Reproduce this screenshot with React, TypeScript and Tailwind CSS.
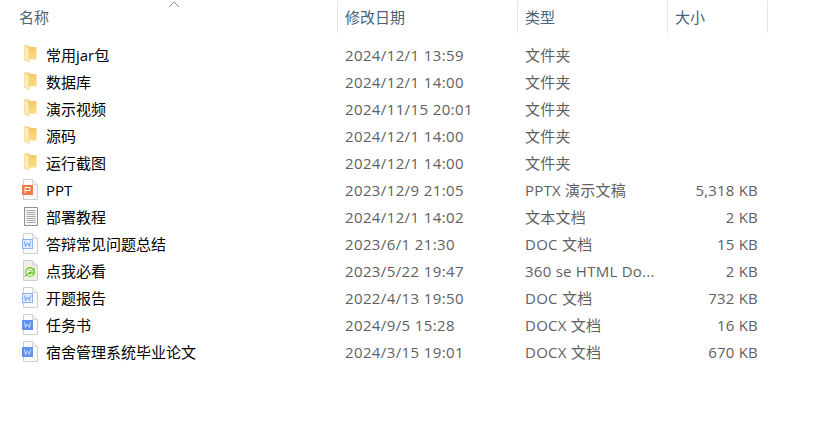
import React from "react";

const font = { fontFamily: '"Open Sans","Noto Sans CJK SC",sans-serif' };

function Folder() {
  return (
    <svg width="13" height="18" viewBox="0 0 13 18" className="block ml-[3px]">
      <defs>
        <linearGradient id="fg" x1="0" y1="0" x2="0" y2="1">
          <stop offset="0" stopColor="#f3c766" />
          <stop offset="1" stopColor="#fbdc85" />
        </linearGradient>
      </defs>
      <path d="M0 0.500h5l1 1.500h6.500v12.500H4V2z" fill="url(#fg)" />
      <path d="M0 0.500l5 2.500v14.500l-5-2.500z" fill="#fdeab6" stroke="#ebc873" strokeWidth="0.5" />
    </svg>
  );
}

function Page({ children }: { children?: React.ReactNode }) {
  return (
    <svg width="18" height="21" viewBox="0 0 18 21" className="block">
      <path d="M2.500 .5H11.500L16.500 5.500V20.500H2.500z" fill="#fbfbfb" stroke="#cfcfcf" />
      <path d="M11.500 .5V5.500H16.500" fill="#f0f0f0" stroke="#d6d6d6" />
      {children}
    </svg>
  );
}

function Ppt() {
  return (
    <Page>
      <rect x="1" y="6" width="11" height="10" fill="#f4794a" />
      <path d="M4 14V8.500h5v3H4" fill="none" stroke="#fff" strokeWidth="1" />
    </Page>
  );
}

function Txt() {
  return (
    <svg width="18" height="19" viewBox="0 0 18 19" className="block">
      <path d="M3.500 .5H16.500V18.500H3.500z" fill="#f6f6f6" stroke="#8f8f8f" />
      <path d="M5.500 3.500h9M5.500 5.500h9M5.500 7.500h9M5.500 9.500h9M5.500 11.500h9M5.500 13.500h9M5.500 15.500h9" stroke="#a8a8a8" />
    </svg>
  );
}

function Doc() {
  return (
    <Page>
      <rect x="1.500" y="6.500" width="10" height="9" fill="#dfeafc" stroke="#8cb4f4" />
      <path d="M3.500 8.500l1 5 2-3.500 2 3.500 1-5" fill="none" stroke="#5f95ee" strokeWidth=".9" />
    </Page>
  );
}

function Docx() {
  return (
    <Page>
      <rect x="1" y="6" width="11" height="10" fill="#6092ef" />
      <path d="M3.500 8.500l1 5 2-3.500 2 3.500 1-5" fill="none" stroke="#dbe6fb" strokeWidth=".9" />
    </Page>
  );
}

function Html() {
  return (
    <svg width="18" height="21" viewBox="0 0 18 21" className="block">
      <path d="M2.500 .5H11.500L16.500 5.500V20.500H2.500z" fill="#f0f0e6" stroke="#cfcfcf" />
      <path d="M11.500 .5V5.500H16.500" fill="#e8e8de" stroke="#d6d6d6" />
      <circle cx="9" cy="12" r="5" fill="#74cc2c" />
      <path d="M6 11.500h6M11.500 13.800a3 3 0 1 1 .4-2.300" fill="none" stroke="#fff" strokeWidth="1.300" />
      <path d="M3.500 16c2-.5 8-4.500 10.500-8" fill="none" stroke="#3f9e1b" strokeWidth=".7" />
    </svg>
  );
}

const rows: [React.ReactNode, string, string, string, string][] = [
  [<Folder />, "常用jar包", "2024/12/1 13:59", "文件夹", ""],
  [<Folder />, "数据库", "2024/12/1 14:00", "文件夹", ""],
  [<Folder />, "演示视频", "2024/11/15 20:01", "文件夹", ""],
  [<Folder />, "源码", "2024/12/1 14:00", "文件夹", ""],
  [<Folder />, "运行截图", "2024/12/1 14:00", "文件夹", ""],
  [<Ppt />, "PPT", "2023/12/9 21:05", "PPTX 演示文稿", "5,318 KB"],
  [<Txt />, "部署教程", "2024/12/1 14:02", "文本文档", "2 KB"],
  [<Doc />, "答辩常见问题总结", "2023/6/1 21:30", "DOC 文档", "15 KB"],
  [<Html />, "点我必看", "2023/5/22 19:47", "360 se HTML Do...", "2 KB"],
  [<Doc />, "开题报告", "2022/4/13 19:50", "DOC 文档", "732 KB"],
  [<Docx />, "任务书", "2024/9/5 15:28", "DOCX 文档", "16 KB"],
  [<Docx />, "宿舍管理系统毕业论文", "2024/3/15 19:01", "DOCX 文档", "670 KB"],
];

export default function App() {
  return (
    <div className="relative w-[834px] h-[441px] bg-white overflow-hidden text-[15px]" style={font}>
      <svg width="12" height="7" viewBox="0 0 12 7" className="absolute left-[168px] top-[1px]">
        <path d="M1 6l5-5 5 5" fill="none" stroke="#8c8c8c" />
      </svg>
      <div className="flex h-[33px] pt-[1px] text-[#4c607a]">
        <div className="w-[337px] pl-[19px] flex items-center">名称</div>
        <div className="w-[180px] pl-[7px] flex items-center border-l border-[#e5e5e5]">修改日期</div>
        <div className="w-[150px] pl-[7px] flex items-center border-l border-[#e5e5e5]">类型</div>
        <div className="w-[100px] pl-[7px] flex items-center border-l border-[#e5e5e5]">大小</div>
        <div className="w-px border-l border-[#e5e5e5]" />
      </div>
      <div className="pt-[9px]">
        {rows.map(([icon, name, date, type, size]) => (
          <div key={name} className="flex h-[27px] items-center">
            <div className="w-[337px] flex items-center">
              <div className="w-[46px] pl-[21px] flex items-center">
                <div className="-mt-[3px]">{icon}</div>
              </div>
              <span className="text-black">{name}</span>
            </div>
            <div className="w-[180px] pl-[8px] text-[#5f5f5f] tracking-[0.38px]">{date}</div>
            <div className="w-[150px] pl-[8px] text-[#5f5f5f] tracking-[0.25px]">{type}</div>
            <div className="w-[91px] text-right text-[#5f5f5f] tracking-[0.2px]">{size}</div>
          </div>
        ))}
      </div>
    </div>
  );
}
